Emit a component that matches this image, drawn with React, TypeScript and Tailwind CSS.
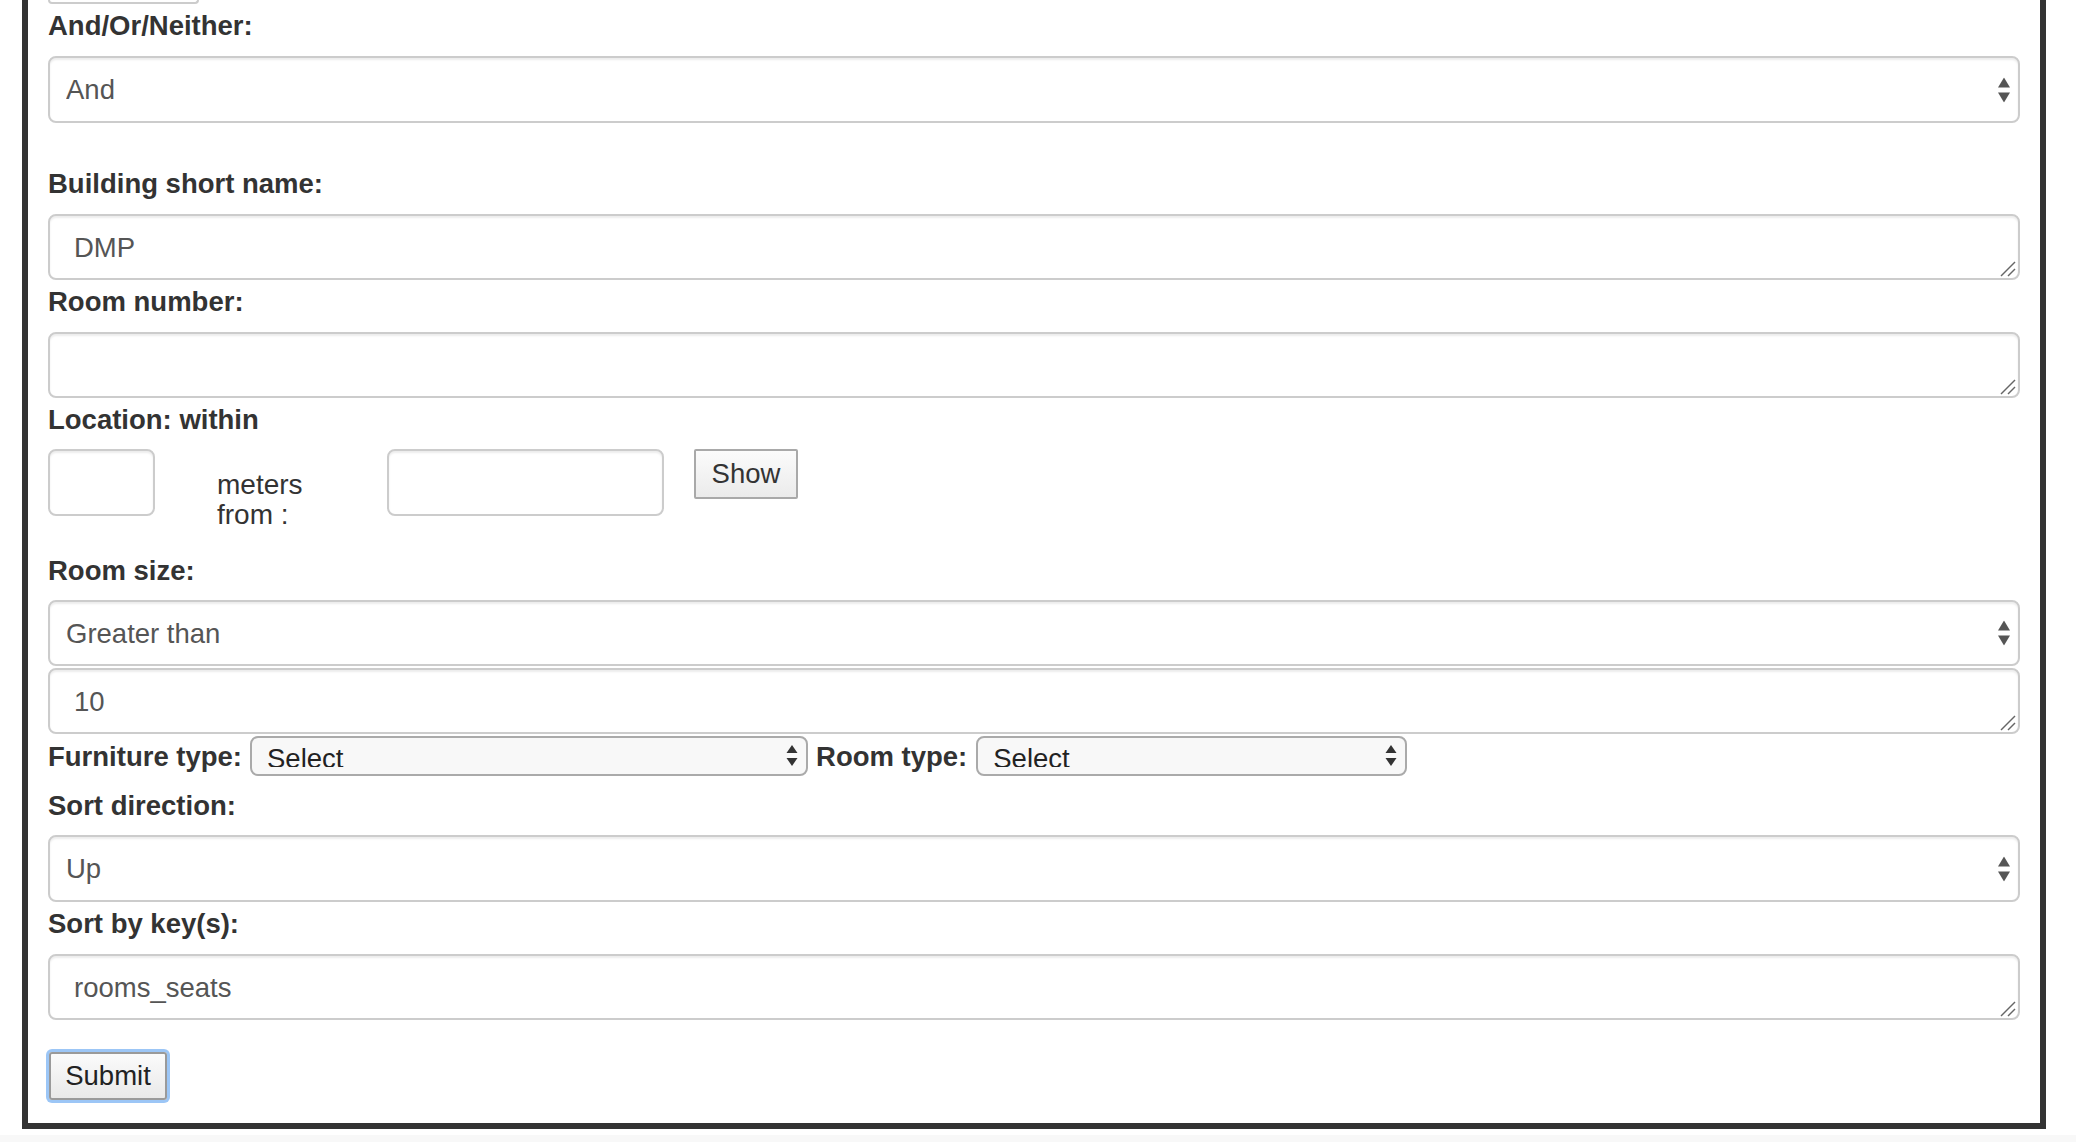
import React from "react";

function Label({ children, className = "" }: { children: React.ReactNode; className?: string }) {
  return (
    <label className={`block text-[27.5px] font-bold leading-[40px] text-[#333] ${className}`}>
      {children}
    </label>
  );
}

function BigArrows() {
  return (
    <svg
      width="12"
      height="25"
      viewBox="0 0 12 25"
      className="pointer-events-none absolute right-[10px] top-1/2 -translate-y-1/2"
    >
      <path d="M6 0 L12 10 L0 10 Z" fill="#555" />
      <path d="M0 15 L12 15 L6 25 Z" fill="#555" />
    </svg>
  );
}

function SmallArrows() {
  return (
    <svg
      width="12"
      height="22"
      viewBox="0 0 12 22"
      className="pointer-events-none absolute right-[10px] top-1/2 -translate-y-1/2"
    >
      <path d="M6 0 L11.5 8 L0.5 8 Z" fill="#333" />
      <path d="M0.5 13 L11.5 13 L6 21 Z" fill="#333" />
    </svg>
  );
}

function BigSelect({ value, tall }: { value: string; tall?: boolean }) {
  return (
    <div className="relative">
      <select
        defaultValue={value}
        className={`block w-full appearance-none rounded-[8px] border-2 border-[#ccc] bg-white pl-[16px] pr-[40px] text-[27.5px] text-[#555] shadow-[inset_0_2px_2px_rgba(0,0,0,0.075)] outline-none ${
          tall ? "h-[67px]" : "h-[66px] pt-[2px]"
        }`}
      >
        <option>{value}</option>
      </select>
      <BigArrows />
    </div>
  );
}

function Area({ value }: { value: string }) {
  return (
    <div className="relative">
      <textarea
        defaultValue={value}
        className="block h-[66px] w-full resize-none overflow-hidden rounded-[8px] border-2 border-[#ccc] bg-white px-[24px] py-[12px] text-[27.5px] leading-[40px] text-[#555] shadow-[inset_0_2px_2px_rgba(0,0,0,0.075)] outline-none"
      />
      <svg
        width="16"
        height="16"
        viewBox="0 0 16 16"
        className="pointer-events-none absolute bottom-[3px] right-[4px]"
      >
        <path d="M15 1 L1 15" stroke="#666" strokeWidth="1.4" />
        <path d="M15 8 L8 15" stroke="#666" strokeWidth="1.4" />
      </svg>
    </div>
  );
}

function SmallSelect({ className }: { className: string }) {
  return (
    <div className={`relative ${className}`}>
      <select className="block h-[40px] w-full appearance-none rounded-[8px] border-2 border-[#aaa] bg-[#f8f8f8] pb-[7px] pl-[15px] pr-[30px] text-[27.5px] text-[#222] outline-none">
        <option>Select</option>
      </select>
      <SmallArrows />
    </div>
  );
}

const inputCls =
  "h-[67px] rounded-[8px] border-2 border-[#ccc] bg-white px-[24px] text-[27.5px] text-[#555] shadow-[inset_0_2px_2px_rgba(0,0,0,0.075)] outline-none";

export default function App() {
  return (
    <div className="h-[1142px] w-full overflow-hidden bg-white font-['Liberation_Sans',Arial,sans-serif]">
      <div className="ml-[22px] w-[2024px] border-x-[6px] border-b-[6px] border-[#333] px-[20px] pb-[23px]">
        <div className="h-[4px] w-[151px] rounded-b-[8px] border-x-2 border-b-2 border-[#ccc]" />

        <Label className="mb-[10px] mt-[2px]">And/Or/Neither:</Label>
        <BigSelect value="And" tall />

        <Label className="mb-[10px] mt-[41px]">Building short name:</Label>
        <Area value="DMP" />

        <Label className="mb-[10px] mt-[2px]">Room number:</Label>
        <Area value="" />

        <Label className="mb-[9px] mt-[2px]">Location: within</Label>
        <div className="flex h-[81px] items-start">
          <input className={`${inputCls} w-[107px]`} />
          <div className="ml-[62px] mt-[21px] w-[170px] text-[28px] leading-[30px] text-[#333]">
            meters
            <br />
            from :
          </div>
          <input className={`${inputCls} w-[277px]`} />
          <button className="ml-[30px] h-[50px] w-[104px] rounded-[2px] border-2 border-[#a9a9a9] bg-linear-to-b from-[#fbfbfb] to-[#ebebeb] text-[27.5px] text-[#333]">
            Show
          </button>
        </div>

        <Label className="mb-[9px] mt-[21px]">Room size:</Label>
        <BigSelect value="Greater than" />
        <div className="mt-[2px]">
          <Area value="10" />
        </div>

        <div className="mt-[2px] flex h-[40px] items-start">
          <span className="text-[27.5px] font-bold leading-[42px] text-[#333]">Furniture type:</span>
          <SmallSelect className="ml-[8px] w-[558px]" />
          <span className="ml-[8px] text-[27.5px] font-bold leading-[42px] text-[#333]">Room type:</span>
          <SmallSelect className="ml-[9px] w-[431px]" />
        </div>

        <Label className="mb-[9px] mt-[10px]">Sort direction:</Label>
        <BigSelect value="Up" tall />

        <Label className="mb-[10px] mt-[2px]">Sort by key(s):</Label>
        <Area value="rooms_seats" />

        <div className="mt-[32px] pl-[1px]">
          <button className="h-[48px] w-[118px] rounded-[3px] border-2 border-[#9a9a9a] bg-linear-to-b from-[#fbfbfb] to-[#e9e9e9] text-[27.5px] text-[#222] shadow-[0_0_0_3px_#9cc6f6]">
            Submit
          </button>
        </div>
      </div>
      <div className="mt-[6px] h-[20px] bg-[#f8f8f8]" />
    </div>
  );
}
